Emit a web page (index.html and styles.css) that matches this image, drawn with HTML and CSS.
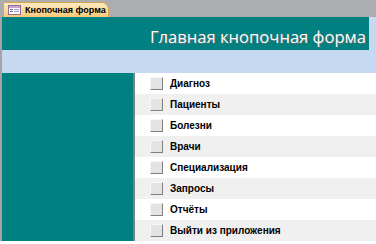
FILE: index.html
```html
<!DOCTYPE html>
<html lang="ru">
  <head>
    <meta charset="UTF-8" />
    <title>Кнопочная форма</title>
    <link rel="stylesheet" href="styles.css">
  </head>
  <body>
    <div class="tabbar">
      <div class="tab">
        <svg class="tab-icon" width="13" height="10" viewBox="0 0 13 10">
          <rect x="0.5" y="0.5" width="12" height="9" fill="#fff" stroke="#8a6f9a"/>
          <rect x="1" y="1" width="11" height="2" fill="#c9a3c9"/>
          <rect x="2" y="4" width="3" height="1" fill="#6a6aa8"/>
          <rect x="6" y="4" width="5" height="1" fill="#9a9ac8"/>
          <rect x="2" y="6" width="3" height="1" fill="#6a6aa8"/>
          <rect x="6" y="6" width="5" height="1" fill="#9a9ac8"/>
        </svg>
        <span>Кнопочная форма</span>
      </div>
    </div>

    <div class="form">
      <div class="header">
        <div class="title">Главная кнопочная форма</div>
      </div>
      <div class="band"></div>
      <div class="main">
        <div class="side"></div>
        <ul class="menu">
          <li><span class="btn"></span>Диагноз</li>
          <li><span class="btn"></span>Пациенты</li>
          <li><span class="btn"></span>Болезни</li>
          <li><span class="btn"></span>Врачи</li>
          <li><span class="btn"></span>Специализация</li>
          <li><span class="btn"></span>Запросы</li>
          <li><span class="btn"></span>Отчёты</li>
          <li><span class="btn"></span>Выйти из приложения</li>
        </ul>
      </div>
    </div>
  </body>
</html>
```

FILE: styles.css
```css
* {
  margin: 0;
  padding: 0;
  box-sizing: border-box;
}

body {
  width: 376px;
  height: 244px;
  overflow: hidden;
  background-color: #fff;
  font-family: "Liberation Sans", Arial, sans-serif;
}

.tabbar {
  height: 17px;
  background-color: #abadb0;
  padding-left: 3px;
  padding-top: 2px;
}

.tab {
  width: 106px;
  height: 15px;
  display: flex;
  align-items: center;
  gap: 4px;
  padding-left: 4px;
  background: linear-gradient(#fdebc2, #f8c878);
  border: 1px solid #d9a44e;
  border-bottom: none;
  border-radius: 2px 7px 0 0;
  font-size: 9px;
  font-weight: bold;
  white-space: nowrap;
  color: #000;
}

.tab-icon {
  flex-shrink: 0;
}

.form {
  border-left: 2px solid #a3a3a3;
}

.header {
  display: flex;
  background-color: #c6d9f1;
}

.title {
  width: 367px;
  height: 33px;
  background-color: #008080;
  color: #fff;
  font-family: "Open Sans", sans-serif;
  font-size: 16.6px;
  text-align: right;
  padding-right: 3px;
  padding-top: 8px;
  text-shadow: 1px 1px 1px #6f6f6f;
}

.band {
  height: 23px;
  background-color: #c6d9f1;
}

.main {
  display: flex;
}

.side {
  width: 133px;
  height: 168px;
  background-color: #008080;
  border-right: 2px solid #7f7f7f;
}

.menu {
  flex: 1;
  list-style: none;
}

.menu li {
  height: 21px;
  display: flex;
  align-items: center;
  gap: 7px;
  padding-left: 15px;
  font-size: 10px;
  font-weight: bold;
  color: #000;
}

.menu li:nth-child(even) {
  background-color: #f0f0f0;
}

.btn {
  width: 13px;
  height: 13px;
  background-color: #e3e3e3;
  border: 1px solid;
  border-color: #f7f7f7 #808080 #808080 #f7f7f7;
}
```
